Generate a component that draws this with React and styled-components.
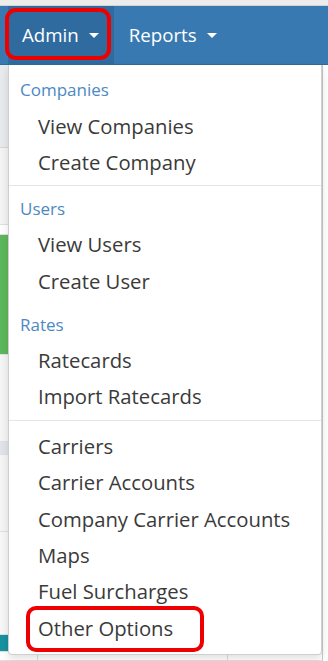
import React from 'react'
import styled, { createGlobalStyle } from 'styled-components'

const GlobalStyle = createGlobalStyle`
  *, *::before, *::after {
    box-sizing: border-box;
  }
  html, body {
    margin: 0;
    padding: 0;
    background: #ffffff;
    font-family: "Open Sans", "Liberation Sans", sans-serif;
  }
`

const Page = styled.div`
  position: relative;
  width: 328px;
  height: 661px;
  overflow: hidden;
  display: flex;
  flex-direction: column;
`

const TopStrip = styled.div`
  flex-shrink: 0;
  height: 6px;
  background: #ececec;
  border-bottom: 1px solid #d4d4d4;
`

const Navbar = styled.nav`
  flex-shrink: 0;
  display: flex;
  align-items: stretch;
  height: 59px;
  padding-left: 8px;
  background: #3879b2;
  border-bottom: 1px solid #2f6a9c;
`

const NavItem = styled.div`
  position: relative;
  display: flex;
  align-items: center;
  padding: 0 15px 2px ${(p) => (p.$active ? 14 : 15)}px;
  background: ${(p) => (p.$active ? '#2f6b9f' : 'transparent')};
  color: #ffffff;
  font-size: 18.7px;

  ${(p) => p.$highlight && `
    &::after {
      content: '';
      position: absolute;
      left: -3px;
      top: 2px;
      width: 106px;
      height: 52px;
      border: 4px solid #ee0000;
      border-radius: 11px;
    }
  `}
`

const Caret = styled.span`
  display: inline-block;
  margin-left: 10px;
  margin-top: 3px;
  border-top: 5px solid #ffffff;
  border-left: 5px solid transparent;
  border-right: 5px solid transparent;
`

const Backdrop = styled.div`
  flex: 1;
  min-height: 0;
  overflow: hidden;
  display: flex;
  flex-direction: column;
`

const Stripe = styled.div`
  flex-shrink: 0;
  height: ${(p) => p.$h}px;
  background: ${(p) => p.$bg};
  border-bottom: 1px solid ${(p) => p.$line || '#e0e0e0'};
  border-right: 1px solid #c8c8c8;
  width: 323px;
  display: flex;
`

const Badge = styled.div`
  width: 8px;
  background: ${(p) => p.$color};
`

const Cell = styled.div`
  width: ${(p) => p.$w}px;
  border-right: 1px solid #dcdcdc;
`

const Menu = styled.ul`
  position: absolute;
  left: 8px;
  top: 65px;
  width: 314px;
  margin: 0;
  padding: 7px 0 8px;
  list-style: none;
  background: #ffffff;
  border: 1px solid #cfcfcf;
  border-top: none;
  border-radius: 0 0 4px 4px;
  box-shadow: 0 4px 8px rgba(0, 0, 0, 0.12);
`

const Header = styled.li`
  height: 35px;
  line-height: 35px;
  padding-left: 11px;
  margin-top: ${(p) => p.$gap || 0}px;
  color: #4d88c4;
  font-size: 17px;
`

const Item = styled.li`
  position: relative;
  height: 36.4px;
  padding-top: 1.5px;
  line-height: 34.9px;
  padding-left: 29px;
  color: #3a3a3a;
  font-size: 20.3px;

  ${(p) => p.$highlight && `
    &::after {
      content: '';
      position: absolute;
      left: 17px;
      top: -3px;
      width: 178px;
      height: 46px;
      border: 4px solid #ee0000;
      border-radius: 10px;
    }
  `}
`

const Divider = styled.li`
  height: 1px;
  margin: ${(p) => p.$m || 5}px 0;
  background: #e5e5e5;
`

const sections = [
  { header: 'Companies', items: ['View Companies', 'Create Company'] },
  { divider: 5 },
  { header: 'Users', items: ['View Users', 'Create User'] },
  { header: 'Rates', gap: 8, items: ['Ratecards', 'Import Ratecards'] },
  { divider: 6 },
  {
    items: [
      'Carriers',
      'Carrier Accounts',
      'Company Carrier Accounts',
      'Maps',
      'Fuel Surcharges',
      'Other Options',
    ],
  },
]

const App = () => {
  return (
    <Page>
      <GlobalStyle />
      <TopStrip />
      <Navbar>
        <NavItem $active $highlight>
          {'Admin'}
          <Caret />
        </NavItem>
        <NavItem>
          {'Reports'}
          <Caret />
        </NavItem>
      </Navbar>
      <Backdrop>
        <Stripe $h={83} $bg="#e9eaed" $line="#d6d6d6" />
        <Stripe $h={77} $bg="#f4f4f4" />
        <Stripe $h={10} $bg="#ffffff" />
        <Stripe $h={120} $bg="#f6f6f6">
          <Badge $color="#5cb85c" />
        </Stripe>
        <Stripe $h={87} $bg="#f5f5f5" />
        <Stripe $h={13} $bg="#e1e5ea" />
        <Stripe $h={77} $bg="#f5f5f5" />
        <Stripe $h={103} $bg="#f7f7f7" />
        <Stripe $h={17} $bg="#f7f7f7">
          <Badge $color="#17939f" />
        </Stripe>
        <Stripe $h={9} $bg="#ffffff">
          <Cell $w={38} />
          <Cell $w={190} />
        </Stripe>
      </Backdrop>
      <Menu>
        {sections.map((s, i) => {
          if (s.divider) {
            return <Divider key={i} $m={s.divider} />
          }
          return (
            <React.Fragment key={i}>
              {s.header && <Header $gap={s.gap}>{s.header}</Header>}
              {s.items.map((label) => (
                <Item key={label} $highlight={label === 'Other Options'}>
                  {label}
                </Item>
              ))}
            </React.Fragment>
          )
        })}
      </Menu>
    </Page>
  )
}

export default App
